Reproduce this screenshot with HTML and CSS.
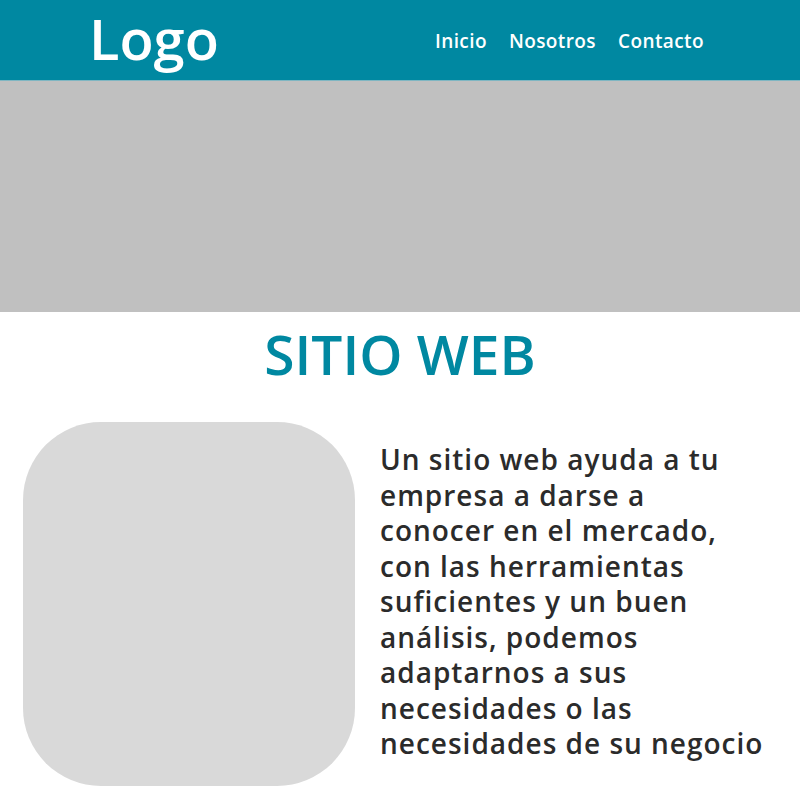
FILE: index.html
```html
<!DOCTYPE html>
<html lang="es">
<head>
<meta charset="utf-8">
<title>Sitio web</title>
<link rel="stylesheet" href="styles.css">
</head>
<body>
<header class="header">
  <div class="logo">Logo</div>
  <nav class="nav">
    <a href="#" class="nav-link">Inicio</a>
    <a href="#" class="nav-link">Nosotros</a>
    <a href="#" class="nav-link">Contacto</a>
  </nav>
</header>
<div class="hero"></div>
<h1 class="title">SITIO WEB</h1>
<section class="content">
  <div class="image"></div>
  <p class="text">Un sitio web ayuda a tu empresa a darse a conocer en el mercado, con las herramientas suficientes y un buen análisis, podemos adaptarnos a sus necesidades o las necesidades de su negocio</p>
</section>
</body>
</html>
```
FILE: styles.css
```css
* { box-sizing: border-box; }
body {
  margin: 0;
  font-family: "Open Sans", "Lato", sans-serif;
  background: #ffffff;
}
.header {
  height: 81px;
  background: #0088a1;
  display: flex;
  align-items: center;
  padding: 0 96px 0 89px;
  border-bottom: 1px solid #7fb6c2;
}
.logo {
  color: #ffffff;
  font-size: 56px;
  font-weight: 600;
  line-height: 1;
  margin-top: -4px;
}
.nav {
  margin-left: auto;
  display: flex;
  gap: 22px;
  margin-top: 2px;
}
.nav-link {
  color: #ffffff;
  text-decoration: none;
  font-size: 19px;
  font-weight: 600;
  letter-spacing: 0.4px;
}
.hero {
  height: 231px;
  background: #c0c0c0;
}
.title {
  margin: 2px 0 0;
  text-align: center;
  color: #0088a1;
  font-size: 55px;
  font-weight: 600;
  line-height: 80px;
}
.content {
  display: flex;
  align-items: flex-start;
  gap: 25px;
  padding: 28px 20px 0 23px;
}
.image {
  flex: 0 0 332px;
  height: 364px;
  background: #d9d9d9;
  border-radius: 78px;
}
.text {
  margin: 20px 0 0;
  color: #2b2b2b;
  font-size: 28px;
  font-weight: 600;
  letter-spacing: 1px;
  line-height: 35.5px;
  width: 386px;
}
```
